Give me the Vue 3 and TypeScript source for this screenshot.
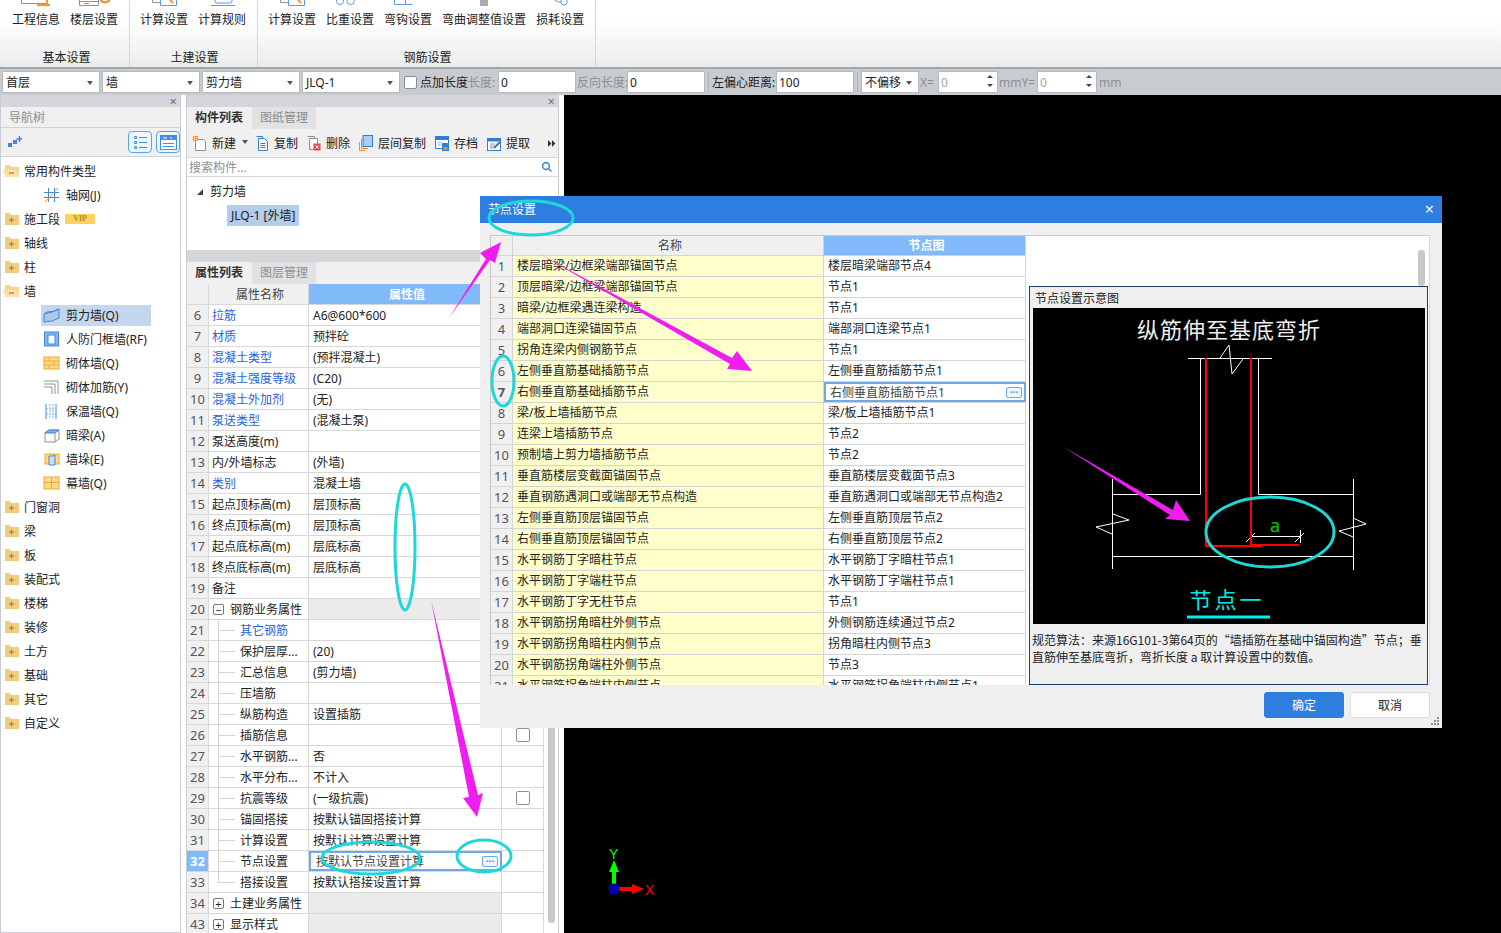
<script setup lang="ts">
interface RibbonItem { label: string; icon: string }
interface RibbonGroup { title: string; items: RibbonItem[] }
interface NavRow { label: string; icon: string; open?: boolean; child?: boolean; active?: boolean; vip?: boolean }
interface PropRow {
  no: number
  name: string
  value?: string
  link?: boolean
  sub?: boolean
  last?: boolean
  group?: '+' | '-'
  check?: boolean
  editing?: boolean
}

const ribbon: RibbonGroup[] = [
  { title: '基本设置', items: [{ label: '工程信息', icon: 'info' }, { label: '楼层设置', icon: 'floor' }] },
  { title: '土建设置', items: [{ label: '计算设置', icon: 'calc' }, { label: '计算规则', icon: 'rule' }] },
  {
    title: '钢筋设置',
    items: [
      { label: '计算设置', icon: 'calc' },
      { label: '比重设置', icon: 'weight' },
      { label: '弯钩设置', icon: 'hook' },
      { label: '弯曲调整值设置', icon: 'bend' },
      { label: '损耗设置', icon: 'loss' },
    ],
  },
]

const navRows: NavRow[] = [
  { label: '常用构件类型', icon: 'folder', open: true },
  { label: '轴网(J)', icon: 'grid', child: true },
  { label: '施工段', icon: 'folder', vip: true },
  { label: '轴线', icon: 'folder' },
  { label: '柱', icon: 'folder' },
  { label: '墙', icon: 'folder', open: true },
  { label: '剪力墙(Q)', icon: 'shear', child: true, active: true },
  { label: '人防门框墙(RF)', icon: 'door', child: true },
  { label: '砌体墙(Q)', icon: 'brick', child: true },
  { label: '砌体加筋(Y)', icon: 'rebar', child: true },
  { label: '保温墙(Q)', icon: 'insul', child: true },
  { label: '暗梁(A)', icon: 'beam', child: true },
  { label: '墙垛(E)', icon: 'pier', child: true },
  { label: '幕墙(Q)', icon: 'curtain', child: true },
  { label: '门窗洞', icon: 'folder' },
  { label: '梁', icon: 'folder' },
  { label: '板', icon: 'folder' },
  { label: '装配式', icon: 'folder' },
  { label: '楼梯', icon: 'folder' },
  { label: '装修', icon: 'folder' },
  { label: '土方', icon: 'folder' },
  { label: '基础', icon: 'folder' },
  { label: '其它', icon: 'folder' },
  { label: '自定义', icon: 'folder' },
]

const propRows: PropRow[] = [
  { no: 6, name: '拉筋', value: 'A6@600*600', link: true },
  { no: 7, name: '材质', value: '预拌砼', link: true },
  { no: 8, name: '混凝土类型', value: '(预拌混凝土)', link: true },
  { no: 9, name: '混凝土强度等级', value: '(C20)', link: true },
  { no: 10, name: '混凝土外加剂', value: '(无)', link: true },
  { no: 11, name: '泵送类型', value: '(混凝土泵)', link: true },
  { no: 12, name: '泵送高度(m)' },
  { no: 13, name: '内/外墙标志', value: '(外墙)' },
  { no: 14, name: '类别', value: '混凝土墙', link: true },
  { no: 15, name: '起点顶标高(m)', value: '层顶标高' },
  { no: 16, name: '终点顶标高(m)', value: '层顶标高' },
  { no: 17, name: '起点底标高(m)', value: '层底标高' },
  { no: 18, name: '终点底标高(m)', value: '层底标高' },
  { no: 19, name: '备注' },
  { no: 20, name: '钢筋业务属性', group: '-' },
  { no: 21, name: '其它钢筋', link: true, sub: true },
  { no: 22, name: '保护层厚...', value: '(20)', sub: true },
  { no: 23, name: '汇总信息', value: '(剪力墙)', sub: true },
  { no: 24, name: '压墙筋', sub: true },
  { no: 25, name: '纵筋构造', value: '设置插筋', sub: true },
  { no: 26, name: '插筋信息', sub: true, check: true },
  { no: 27, name: '水平钢筋...', value: '否', sub: true },
  { no: 28, name: '水平分布...', value: '不计入', sub: true },
  { no: 29, name: '抗震等级', value: '(一级抗震)', sub: true, check: true },
  { no: 30, name: '锚固搭接', value: '按默认锚固搭接计算', sub: true },
  { no: 31, name: '计算设置', value: '按默认计算设置计算', sub: true },
  { no: 32, name: '节点设置', value: '按默认节点设置计算', sub: true, editing: true },
  { no: 33, name: '搭接设置', value: '按默认搭接设置计算', sub: true, last: true },
  { no: 34, name: '土建业务属性', group: '+' },
  { no: 43, name: '显示样式', group: '+' },
]

const nodeRows: [string, string][] = [
  ['楼层暗梁/边框梁端部锚固节点', '楼层暗梁端部节点4'],
  ['顶层暗梁/边框梁端部锚固节点', '节点1'],
  ['暗梁/边框梁遇连梁构造', '节点1'],
  ['端部洞口连梁锚固节点', '端部洞口连梁节点1'],
  ['拐角连梁内侧钢筋节点', '节点1'],
  ['左侧垂直筋基础插筋节点', '左侧垂直筋插筋节点1'],
  ['右侧垂直筋基础插筋节点', '右侧垂直筋插筋节点1'],
  ['梁/板上墙插筋节点', '梁/板上墙插筋节点1'],
  ['连梁上墙插筋节点', '节点2'],
  ['预制墙上剪力墙插筋节点', '节点2'],
  ['垂直筋楼层变截面锚固节点', '垂直筋楼层变截面节点3'],
  ['垂直钢筋遇洞口或端部无节点构造', '垂直筋遇洞口或端部无节点构造2'],
  ['左侧垂直筋顶层锚固节点', '左侧垂直筋顶层节点2'],
  ['右侧垂直筋顶层锚固节点', '右侧垂直筋顶层节点2'],
  ['水平钢筋丁字暗柱节点', '水平钢筋丁字暗柱节点1'],
  ['水平钢筋丁字端柱节点', '水平钢筋丁字端柱节点1'],
  ['水平钢筋丁字无柱节点', '节点1'],
  ['水平钢筋拐角暗柱外侧节点', '外侧钢筋连续通过节点2'],
  ['水平钢筋拐角暗柱内侧节点', '拐角暗柱内侧节点3'],
  ['水平钢筋拐角端柱外侧节点', '节点3'],
  ['水平钢筋拐角端柱内侧节点', '水平钢筋拐角端柱内侧节点1'],
]
</script>

<template>
  <div class="app">
    <header class="ribbon">
      <section v-for="group in ribbon" :key="group.title" class="ribbon-group">
        <div class="ribbon-items">
          <div v-for="item in group.items" :key="item.label" class="ribbon-item">
            <svg class="ribbon-icon" width="36" height="12" viewBox="0 0 36 12" fill="none">
              <template v-if="item.icon === 'info'">
                <path d="M3.500 0v3.500h26V0" stroke="#5b9be0" />
                <path d="M19 5h13" stroke="#ee9a3c" stroke-width="2.500" />
                <path d="M29 0v4" stroke="#ee9a3c" stroke-width="2" />
              </template>
              <template v-else-if="item.icon === 'floor'">
                <path d="M3.500 0v5.500h19V0M3.500 1.500h19M8 3.500h5" stroke="#8a929b" />
                <path d="M24.500 0a5.500 5.500 0 0 0 9 0" stroke="#ee9a3c" stroke-width="2.500" />
              </template>
              <template v-else-if="item.icon === 'calc'">
                <path d="M6.500 0v2.500h8" stroke="#8a929b" />
                <path d="M14.500 0v5.500h16V0" stroke="#5b9be0" />
                <path d="M24 0l3 3" stroke="#ee9a3c" stroke-width="2" />
              </template>
              <template v-else-if="item.icon === 'rule'">
                <path d="M11 0v1q0 2 2 2h13q2 0 2-2V0" stroke="#5b9be0" />
                <path d="M7 5.500h24" stroke="#5b9be0" />
              </template>
              <path v-else-if="item.icon === 'weight'" d="M4.500 0v1.500a3.500 3 0 0 0 7 0V0M15 0v1.500a3.500 3 0 0 0 7 0V0" stroke="#5b9be0" />
              <path v-else-if="item.icon === 'hook'" d="M4.500 0v4.500h18M15.500 0v4.500" stroke="#5b9be0" />
              <rect v-else-if="item.icon === 'bend'" x="14" y="0" width="8" height="6" fill="#a9adb3" />
              <path v-else d="M13 0q3 3 6 2M19 0v2.500q0 2.500 3 2.500t3-2.500V0" stroke="#5b9be0" />
            </svg>
            <span>{{ item.label }}</span>
          </div>
        </div>
        <div class="ribbon-title">{{ group.title }}</div>
      </section>
    </header>

    <div class="optbar">
      <div class="combo w98">首层<i class="caret"></i></div>
      <div class="combo w98">墙<i class="caret"></i></div>
      <div class="combo w98">剪力墙<i class="caret"></i></div>
      <div class="combo w98">JLQ-1<i class="caret"></i></div>
      <span class="check"></span>
      <span class="opt-label w48">点加长度</span>
      <span class="opt-label muted w29">长度:</span>
      <div class="field w78">0</div>
      <span class="opt-label muted w52">反向长度:</span>
      <div class="field w78">0</div>
      <i class="opt-sep"></i>
      <span class="opt-label w64">左偏心距离:</span>
      <div class="field w78">100</div>
      <i class="opt-sep"></i>
      <div class="combo w58">不偏移<i class="caret"></i></div>
      <span class="opt-label muted w19">X=</span>
      <div class="field spin w60 muted-field">0<span class="spin-arrows"><i></i><i></i></span></div>
      <span class="opt-label muted w38">mmY=</span>
      <div class="field spin w60 muted-field">0<span class="spin-arrows"><i></i><i></i></span></div>
      <span class="opt-label muted mm">mm</span>
    </div>

    <main class="workspace">
      <aside class="nav">
        <div class="pane-head"><span class="pane-x">×</span></div>
        <div class="nav-title">导航树</div>
        <div class="nav-tools">
          <svg width="14" height="12" viewBox="0 0 14 12">
            <path d="M0 7h4v4H0zM5 4h4v4H5z" fill="#3f86d8" />
            <path d="M11.500 0v6M8.500 3h6" stroke="#3f86d8" stroke-width="1.500" />
          </svg>
          <span class="spacer"></span>
          <button class="nav-btn">
            <svg width="15" height="15" viewBox="0 0 15 15" fill="none" stroke="#3f8fe0">
              <path d="M1.500 1.500h2v2h-2zM1.500 6.500h2v2h-2zM1.500 11.500h2v2h-2zM6 2.500h8M6 7.500h8M6 12.500h8" />
            </svg>
          </button>
          <button class="nav-btn">
            <svg width="17" height="15" viewBox="0 0 17 15">
              <rect x="0.500" y="0.500" width="16" height="14" fill="#fff" stroke="#3f8fe0" />
              <rect x="1" y="1" width="15" height="4" fill="#3f8fe0" />
              <path d="M3 3h4M10 3h2" stroke="#fff" />
              <path d="M3 8.500h11M3 11.500h11" stroke="#3f8fe0" />
            </svg>
          </button>
        </div>
        <ul class="nav-tree">
          <li v-for="row in navRows" :key="row.label" class="nav-row" :class="{ child: row.child, active: row.active }">
            <svg class="nav-icon" width="18" height="16" viewBox="0 0 18 16" fill="none">
              <template v-if="row.icon === 'folder'">
                <path d="M2 3q0-1 1-1h4l1 2h8v10H2z" :fill="row.open ? '#f1d593' : '#f0cc80'" />
                <path v-if="row.open" d="M0 7h15l1 7H2z" fill="#f6dfa8" />
                <path :d="row.open ? 'M6 10h5' : 'M6 9h5M8.500 6.500v5'" stroke="#b58a34" stroke-width="1.400" />
              </template>
              <template v-else-if="row.icon === 'grid'">
                <path d="M5.500 1v14M11.500 1v14M1 5.500h15M1 10.500h15" stroke="#3f86d8" />
                <path d="M2 15L15 1" stroke="#f08a2c" />
              </template>
              <template v-else-if="row.icon === 'shear'">
                <path d="M1 7q8-1 15-5v9q-7 4-15 4z" fill="#a9c9ef" stroke="#3f86d8" />
                <path d="M1 7l3-2q7 0 12-3" stroke="#3f86d8" />
              </template>
              <template v-else-if="row.icon === 'door'">
                <rect x="1.500" y="1" width="14" height="14" fill="#8ab8ea" stroke="#3f86d8" />
                <rect x="5" y="4" width="7" height="9" fill="#fff" stroke="#3f86d8" />
              </template>
              <template v-else-if="row.icon === 'brick' || row.icon === 'curtain'">
                <rect x="1" y="2" width="15" height="12" fill="#ffd98a" stroke="#efa92e" />
                <path v-if="row.icon === 'brick'" d="M1 6h15M1 10h15M6 2v4M11 6v4M6 10v4" stroke="#efa92e" />
                <path v-else d="M1 7.500h15M8.500 2v12" stroke="#efa92e" />
              </template>
              <path v-else-if="row.icon === 'rebar'" d="M1 2h14v13M1 5h11v10M1 8h8v7" stroke="#8a929b" />
              <template v-else-if="row.icon === 'insul'">
                <path d="M3 1v15M13 1v15" stroke="#3f86d8" />
                <path d="M7 1v15M10 1v15M3 6h10M3 11h10" stroke="#8ab8ea" stroke-dasharray="2 1" />
              </template>
              <template v-else-if="row.icon === 'beam'">
                <path d="M2 6l4-3h10v9l-4 3H2z" fill="#fff" stroke="#8a929b" />
                <path d="M2 6l4-3h10l-4 3z" fill="#7fb0e6" stroke="#3f86d8" />
                <path d="M12 6v9" stroke="#8a929b" />
              </template>
              <template v-else-if="row.icon === 'pier'">
                <rect x="2" y="3" width="14" height="10" fill="#ffd98a" stroke="#efa92e" />
                <path d="M6 5h4l2-1v10H6z" fill="#cfe1f6" stroke="#3f86d8" />
              </template>
            </svg>
            <span>{{ row.label }}</span>
            <span v-if="row.vip" class="vip">VIP</span>
          </li>
        </ul>
      </aside>

      <section class="mid">
        <div class="pane-head"><span class="pane-x">×</span></div>
        <div class="tabs">
          <span class="tab on">构件列表</span>
          <span class="tab">图纸管理</span>
        </div>
        <div class="mid-tools">
          <span class="tool">
            <svg width="14" height="15" viewBox="0 0 14 15" fill="none">
              <path d="M2.500 3.500h8l2 2v9h-10z" fill="#fff" stroke="#8a929b" />
              <path d="M0 0h5v5H0z" fill="#f09a3c" />
              <path d="M1 1h1v1H1zM3 3h1v1H3zM3 1h1v1H3zM1 3h1v1H1z" fill="#fff" />
            </svg>
            新建<i class="caret tool-caret"></i>
          </span>
          <span class="tool">
            <svg width="13" height="15" viewBox="0 0 13 15" fill="none">
              <path d="M.5 .5h6v2" stroke="#2f7fd2" />
              <path d="M2.500 2.500h6l3 3v9h-9z" fill="#fff" stroke="#2f7fd2" />
              <path d="M4.500 7.500h5M4.500 9.500h5M4.500 11.500h5" stroke="#2f7fd2" />
            </svg>
            复制
          </span>
          <span class="tool">
            <svg width="14" height="15" viewBox="0 0 14 15" fill="none">
              <path d="M.5 .5h7v10" stroke="#8a929b" />
              <path d="M2.500 2.500h8v11h-8z" fill="#fff" stroke="#8a929b" />
              <rect x="6.500" y="7.500" width="7" height="7" fill="#e14b4b" />
              <path d="M8.500 9.500l3 3M11.500 9.500l-3 3" stroke="#fff" />
            </svg>
            删除
          </span>
          <span class="tool">
            <svg width="14" height="16" viewBox="0 0 14 16" fill="none">
              <rect x="4" y="0.500" width="9.500" height="11" fill="#a9cdf3" stroke="#2f7fd2" />
              <path d="M2.500 4v9.500H9M.5 7v8.500H6" stroke="#f08a2c" />
            </svg>
            层间复制
          </span>
          <span class="tool">
            <svg width="14" height="15" viewBox="0 0 14 15" fill="none">
              <rect x="0.500" y="0.500" width="13" height="12" fill="#fff" stroke="#2f7fd2" />
              <rect x="1" y="1" width="12" height="3" fill="#2f7fd2" />
              <path d="M3 6.500h3M3 9h3" stroke="#8ab8ea" />
              <rect x="7" y="7" width="7" height="8" fill="#2f7fd2" />
              <rect x="8.500" y="11" width="4" height="3" fill="#f08a2c" />
            </svg>
            存档
          </span>
          <span class="tool">
            <svg width="14" height="15" viewBox="0 0 14 15" fill="none">
              <rect x="0.500" y="2.500" width="13" height="12" fill="#fff" stroke="#2f7fd2" />
              <rect x="1" y="3" width="12" height="2.500" fill="#2f7fd2" />
              <path d="M3 8h5M3 10h4M3 12h3" stroke="#8a929b" />
              <path d="M7 12l6-6" stroke="#5a6f86" stroke-width="2" />
            </svg>
            提取
          </span>
          <span class="spacer"></span>
          <svg class="more" width="8" height="7" viewBox="0 0 8 7" fill="#333">
            <path d="M0 0l3.500 3.500L0 7zM4 0l3.500 3.500L4 7z" />
          </svg>
        </div>
        <div class="search">
          <span>搜索构件...</span>
          <svg width="12" height="12" viewBox="0 0 12 12" fill="none" stroke="#3f8fd8" stroke-width="1.600">
            <circle cx="5" cy="5" r="3.400" />
            <path d="M7.500 7.500l3 3" />
          </svg>
        </div>
        <div class="comp-tree">
          <div class="comp-root"><i class="tri"></i>剪力墙</div>
          <div class="comp-leaf"><span>JLQ-1 [外墙]</span></div>
        </div>
        <div class="split"></div>
        <div class="pane-head"></div>
        <div class="tabs">
          <span class="tab on">属性列表</span>
          <span class="tab">图层管理</span>
        </div>
        <div class="prop-wrap">
          <div class="prop-table">
            <div class="prow phead">
              <span class="c-no"></span>
              <span class="c-name center">属性名称</span>
              <span class="c-val hl">属性值</span>
              <span class="c-extra hl-fill"></span>
            </div>
            <div v-for="row in propRows" :key="row.no" class="prow">
              <span class="c-no" :class="{ 'no-on': row.editing }">{{ row.no }}</span>
              <span class="c-name" :class="{ link: row.link, sub: row.sub, last: row.last }">
                <i v-if="row.group" class="box">{{ row.group === '-' ? '−' : '+' }}</i>
                {{ row.name }}
              </span>
              <span class="c-val" :class="{ grouped: row.group, editing: row.editing }">
                {{ row.value }}
                <i v-if="row.editing" class="dots">···</i>
              </span>
              <span class="c-extra"><i v-if="row.check" class="check-box"></i></span>
            </div>
          </div>
          <div class="vscroll"><i></i></div>
        </div>
      </section>

      <div class="canvas">
        <svg class="axes" width="66" height="60" viewBox="0 0 66 60">
          <path d="M19 44V24" stroke="#00ff00" stroke-width="4" />
          <path d="M19 15l-5 12h10z" fill="#00ff00" />
          <path d="M19 44h20" stroke="#ff0000" stroke-width="4" />
          <path d="M49 44l-12-5v10z" fill="#ff0000" />
          <circle cx="19" cy="44" r="5.500" fill="#0000b8" />
          <text x="14" y="14" class="axis-y">Y</text>
          <text x="50" y="50" class="axis-x">X</text>
        </svg>
      </div>
    </main>

    <div class="dialog">
      <div class="dlg-title">
        <span>节点设置</span>
        <span class="dlg-x">×</span>
      </div>
      <div class="dlg-body">
        <div class="dlg-main">
          <div class="node-table">
            <div class="nrow nhead">
              <span class="n-no"></span>
              <span class="n-name center">名称</span>
              <span class="n-val hl">节点图</span>
            </div>
            <div v-for="(row, i) in nodeRows" :key="row[0]" class="nrow">
              <span class="n-no" :class="{ 'no-on': i === 6 }">{{ i + 1 }}</span>
              <span class="n-name">{{ row[0] }}</span>
              <span class="n-val" :class="{ editing: i === 6 }">
                {{ row[1] }}
                <i v-if="i === 6" class="dots">···</i>
              </span>
            </div>
          </div>
          <div class="dlg-side">
            <div class="side-scroll"><i></i></div>
            <div class="preview">
              <div class="preview-title">节点设置示意图</div>
              <svg class="drawing" width="392" height="316" viewBox="0 0 392 316" fill="none">
                <text x="196" y="30" class="draw-title">纵筋伸至基底弯折</text>
                <g stroke="#fff">
                  <path d="M155 50.500h84M187 50l9-13 3 29 11-15" />
                  <path d="M167.500 50v136.500H79M225.500 50v136.500H320" />
                  <path d="M79.500 171v90M320.500 171v91M79 248.500h241" />
                  <path d="M80 206l16 6-33 7 16 7M320 210l13 6-27 7 14 6" />
                  <path d="M219 228.500h48M213 234l9-9M262 234l9-9M267.500 222v13" />
                </g>
                <path d="M173 50v188h55M218 50v187h48" stroke="#ff0000" stroke-width="2" />
                <text x="242" y="224" class="draw-a">a</text>
                <text x="194" y="300" class="draw-node">节点一</text>
                <path d="M154 309h83" stroke="#00f0f0" stroke-width="3" />
              </svg>
              <p class="preview-note">
                规范算法：来源16G101-3第64页的“墙插筋在基础中锚固构造”节点；垂直筋伸至基底弯折，弯折长度 a 取计算设置中的数值。
              </p>
            </div>
          </div>
        </div>
        <div class="dlg-foot">
          <button class="btn primary">确定</button>
          <button class="btn">取消</button>
        </div>
        <svg class="grip" width="9" height="9" viewBox="0 0 9 9" fill="#8a8f96">
          <rect x="6" y="0" width="2" height="2" />
          <rect x="3" y="3" width="2" height="2" />
          <rect x="6" y="3" width="2" height="2" />
          <rect x="0" y="6" width="2" height="2" />
          <rect x="3" y="6" width="2" height="2" />
          <rect x="6" y="6" width="2" height="2" />
        </svg>
      </div>
    </div>

    <!-- hand drawn markup that sits on top of the screenshot -->
    <svg class="markup" width="1501" height="933" viewBox="0 0 1501 933" fill="none">
      <g fill="#f01cf0">
        <path d="M449 318L486 259 480 253 501 242 495 263 490 260z" />
        <path d="M538 253L732 358 737 351 752 371 727 369 730 364z" />
        <path d="M431 600L478 795 483 793 477 817 463 798 469 797z" />
        <path d="M1062 446L1173 510 1176 500 1190 521 1165 519 1170 515z" />
      </g>
      <g stroke="#1ed8d8" stroke-width="3">
        <ellipse cx="531" cy="218" rx="42" ry="17" />
        <ellipse cx="503" cy="381" rx="11" ry="25" />
        <ellipse cx="405" cy="547" rx="10" ry="63" />
        <ellipse cx="371" cy="858" rx="49" ry="16" />
        <ellipse cx="484" cy="856" rx="27" ry="16" />
        <ellipse cx="1270" cy="532" rx="64" ry="35" />
      </g>
    </svg>
  </div>
</template>

<style>
body {
  background: #fff;
}
</style>

<style scoped>
.app {
  position: relative;
  width: 1501px;
  height: 933px;
  overflow: hidden;
  display: flex;
  flex-direction: column;
  font-family: "Noto Sans", "Noto Sans CJK SC", sans-serif;
  font-size: 12px;
  color: #222;
  background: #fff;
}

.spacer {
  flex: 1;
}

.center {
  text-align: center;
}

/* ribbon */
.ribbon {
  height: 67px;
  flex: none;
  display: flex;
  background: linear-gradient(#ffffff, #ffffff 30%, #e9edec);
}

.ribbon-group {
  padding: 0 11px;
  margin-right: -1px;
  border-right: 1px solid #d4d7d6;
  display: flex;
  flex-direction: column;
}

.ribbon-group:first-child {
  padding-left: 12px;
}

.ribbon-items {
  height: 49px;
  display: flex;
  gap: 10px;
}

.ribbon-item {
  display: flex;
  flex-direction: column;
  align-items: center;
  line-height: 16px;
  white-space: nowrap;
}

.ribbon-icon {
  flex: none;
}

.ribbon-title {
  padding-left: 3px;
  text-align: center;
  line-height: 18px;
}

/* option bar */
.optbar {
  height: 26px;
  flex: none;
  display: flex;
  align-items: center;
  padding-left: 2px;
  background: #c8cbd0;
  border-top: 2px solid #a4a8a8;
  white-space: nowrap;
}

.combo,
.field {
  height: 22px;
  box-sizing: border-box;
  line-height: 21px;
  padding-left: 3px;
  background: #fff;
  border: 1px solid #b5b8bc;
  position: relative;
  flex: none;
}

.combo {
  margin-right: 2px;
}

.field {
  padding-left: 2px;
}

.w98 { width: 98px; }
.w78 { width: 78px; }
.w58 { width: 58px; margin-right: 1px; }
.w60 { width: 60px; }

.opt-label {
  flex: none;
  display: block;
}

.w19 { width: 18px; }
.w29 { width: 30px; }
.w38 { width: 39px; padding-left: 1px; box-sizing: border-box; }
.w48 { width: 48px; }
.w52 { width: 50px; padding-left: 1px; box-sizing: content-box; }
.w64 { width: 64px; }
.mm { margin-left: 2px; }

.caret {
  position: absolute;
  right: 6px;
  top: 9px;
  border: 3px solid transparent;
  border-top: 4px solid #555;
  border-bottom: 0;
}

.check {
  width: 13px;
  height: 13px;
  margin: 0 3px 0 2px;
  flex: none;
  box-sizing: border-box;
  background: #fff;
  border: 1px solid #8b8f94;
  border-radius: 2px;
}

.opt-label.muted {
  color: #8c8f94;
}

.opt-sep {
  width: 1px;
  height: 20px;
  margin: 0 3px;
  background: #b0b3b7;
}

.muted-field {
  color: #a2a5a8;
}

.spin-arrows {
  position: absolute;
  right: 4px;
  top: 3px;
  display: flex;
  flex-direction: column;
  gap: 6px;
}

.spin-arrows i {
  border: 3px solid transparent;
  border-bottom: 3px solid #444;
  border-top: 0;
}

.spin-arrows i:last-child {
  border-top: 3px solid #444;
  border-bottom: 0;
}

/* panels */
.workspace {
  flex: 1;
  min-height: 0;
  display: flex;
}

.pane-head {
  height: 12px;
  flex: none;
  background: #d4d6da;
  position: relative;
}

.pane-x {
  position: absolute;
  right: 3px;
  top: -2px;
  color: #6c6f74;
  font-size: 13px;
  line-height: 16px;
}

.nav {
  width: 181px;
  box-sizing: border-box;
  flex: none;
  margin-right: 5px;
  border: 1px solid #c9ccd0;
  border-top: 0;
  display: flex;
  flex-direction: column;
}

.nav-title {
  height: 21px;
  flex: none;
  box-sizing: border-box;
  padding-left: 8px;
  line-height: 21px;
  color: #8a8d92;
  background: #f0f0f0;
  border-bottom: 1px solid #cfd1d4;
}

.nav-tools {
  height: 29px;
  flex: none;
  box-sizing: border-box;
  display: flex;
  align-items: center;
  gap: 4px;
  padding: 0 0 0 7px;
  background: #f0f0f0;
  border-bottom: 1px solid #cfd1d4;
}

.nav-btn {
  width: 24px;
  height: 22px;
  padding: 0;
  display: flex;
  align-items: center;
  justify-content: center;
  background: #eef6ff;
  border: 1px solid #5aa5ea;
  border-radius: 4px;
}

.nav-tree {
  list-style: none;
  margin: 2px 0 0;
  padding: 0;
}

.nav-row {
  height: 24px;
  display: flex;
  align-items: center;
  gap: 3px;
  padding-left: 2px;
}

.nav-row.child {
  padding-left: 42px;
  gap: 5px;
  position: relative;
}

.nav-row.active {
  background: linear-gradient(#c5d7ee, #c5d7ee) 40px 50% / 110px 21px no-repeat;
}

.vip {
  width: 30px;
  height: 10px;
  margin-left: 2px;
  text-align: center;
  font-family: "Liberation Serif", serif;
  font-size: 8px;
  font-weight: 700;
  line-height: 10px;
  color: #b8892a;
  background: #fbd25c;
}

.mid {
  width: 373px;
  box-sizing: border-box;
  flex: none;
  border-right: 1px solid #c9ccd0;
  border-left: 1px solid #c9ccd0;
  display: flex;
  flex-direction: column;
  min-height: 0;
}

.tabs {
  height: 22px;
  flex: none;
  display: flex;
  background: #f0f0f0;
}

.tab {
  width: 64px;
  text-align: center;
  line-height: 22px;
  color: #8a8d92;
  background: #e2e2e2;
  border-left: 1px solid #f0f0f0;
}

.tab.on {
  color: #333;
  font-weight: 700;
  background: #f0f0f0;
  border-left: 0;
}

.mid-tools {
  height: 28px;
  flex: none;
  display: flex;
  align-items: center;
  gap: 9px;
  padding-left: 6px;
  background: #f0f0f0;
  white-space: nowrap;
}

.tool {
  display: flex;
  align-items: center;
  gap: 5px;
  position: relative;
}

.tool:first-child {
  padding-right: 12px;
  margin-right: -1px;
}

.tool-caret {
  right: 0;
  top: 6px;
}

.more {
  margin-right: 2px;
}

.search {
  height: 20px;
  flex: none;
  box-sizing: border-box;
  display: flex;
  align-items: center;
  justify-content: space-between;
  padding: 0 5px 0 2px;
  color: #8c8f94;
  border-top: 1px solid #d8d8d8;
  border-bottom: 1px solid #d8d8d8;
}

.comp-tree {
  height: 68px;
  flex: none;
  padding-top: 4px;
  box-sizing: border-box;
}

.comp-root {
  height: 22px;
  line-height: 22px;
  padding-left: 10px;
  display: flex;
  align-items: center;
}

.tri {
  width: 0;
  height: 0;
  margin-right: 7px;
  border-left: 6px solid transparent;
  border-bottom: 6px solid #444;
}

.comp-leaf {
  padding: 2px 0 0 40px;
}

.comp-leaf span {
  display: inline-block;
  line-height: 21px;
  padding: 0 4px;
  background: #b3cdea;
}

.split {
  height: 5px;
  flex: none;
}

.prop-wrap {
  flex: 1;
  min-height: 0;
  display: flex;
}

.prop-table {
  width: 357px;
  flex: none;
}

.prow {
  height: 21px;
  display: flex;
  box-sizing: border-box;
  border-bottom: 1px solid #d8d8d8;
  line-height: 21px;
  white-space: nowrap;
}

.prow > span {
  display: block;
  box-sizing: border-box;
  border-right: 1px solid #d8d8d8;
}

.c-no {
  width: 22px;
  flex: none;
  text-align: center;
  font-size: 13px;
  color: #555;
  background: #f0f0f0;
}

.c-name {
  width: 100px;
  flex: none;
  padding-left: 3px;
  position: relative;
}

.c-name.link {
  color: #2563d8;
}

.c-name.sub {
  padding-left: 31px;
}

.c-name.sub::before {
  content: "";
  position: absolute;
  left: 9px;
  top: 0;
  bottom: 0;
  width: 16px;
  height: 21px;
  border-left: 1px solid #d4d4d4;
  background: linear-gradient(#d4d4d4, #d4d4d4) 0 10px / 16px 1px no-repeat;
}

.c-name.sub.last::before {
  height: 10px;
  background: none;
  border-bottom: 1px solid #d4d4d4;
}

.box {
  display: inline-block;
  width: 11px;
  height: 11px;
  margin: 0 3px 0 1px;
  box-sizing: border-box;
  font-style: normal;
  text-align: center;
  font-size: 11px;
  line-height: 9px;
  vertical-align: 0;
  border: 1px solid #777;
  border-radius: 2px;
  background: #fff;
}

.c-val {
  width: 193px;
  flex: none;
  padding-left: 4px;
  position: relative;
}

.c-val.grouped {
  background: #ebebeb;
}

.c-extra {
  width: 42px;
  flex: none;
  display: flex !important;
  align-items: center;
  justify-content: center;
}

.hl {
  color: #fff;
  text-align: center;
  font-weight: 700;
  background: #80baf8;
}

.hl-fill {
  background: #fff;
}

.phead .c-no,
.phead .c-name {
  background: #f0f0f0;
  color: #444;
}

.no-on {
  color: #fff;
  font-weight: 700;
  background: #80baf8;
}

.editing {
  border: 2px solid #6ba9ea !important;
  padding-left: 5px;
  line-height: 17px;
  color: #444;
}

.dots {
  position: absolute;
  right: 2px;
  top: 3px;
  width: 16px;
  height: 11px;
  box-sizing: border-box;
  font-style: normal;
  font-weight: 700;
  text-align: center;
  font-size: 10px;
  line-height: 8px;
  color: #4a90e2;
  background: #eef5fd;
  border: 1px solid #6ba9ea;
  border-radius: 2px;
}

.check-box {
  width: 14px;
  height: 14px;
  box-sizing: border-box;
  border: 1px solid #8b8f94;
  border-radius: 2px;
  background: #fff;
}

.vscroll {
  flex: 1;
  display: flex;
  justify-content: center;
  align-items: flex-end;
}

.vscroll i {
  width: 7px;
  height: 620px;
  margin-bottom: 10px;
  border-radius: 4px;
  background: #c8c8c8;
}

.canvas {
  flex: 1;
  margin-left: 5px;
  background: #000;
  position: relative;
}

.axes {
  position: absolute;
  left: 31px;
  top: 750px;
}

.axis-y {
  font-family: "Liberation Sans", sans-serif;
  font-size: 14px;
  fill: #00ff00;
}

.axis-x {
  font-family: "Liberation Sans", sans-serif;
  font-size: 14px;
  fill: #ff0000;
}

/* dialog */
.dialog {
  position: absolute;
  left: 480px;
  top: 196px;
  width: 962px;
  height: 532px;
  display: flex;
  flex-direction: column;
  background: #efefef;
}

.dlg-title {
  height: 27px;
  flex: none;
  box-sizing: border-box;
  display: flex;
  justify-content: space-between;
  padding: 0 8px;
  line-height: 27px;
  color: #fff;
  background: #2e7ee0;
}

.dlg-x {
  font-size: 16px;
}

.dlg-body {
  flex: 1;
  min-height: 0;
  position: relative;
  display: flex;
  flex-direction: column;
  padding: 12px 12px 0 10px;
}

.dlg-main {
  height: 449px;
  flex: none;
  display: flex;
  overflow: hidden;
  border-top: 1px solid #c9c9c9;
  border-left: 1px solid #c9c9c9;
  border-right: 1px solid #d8d8d8;
  background: #fff;
}

.node-table {
  width: 535px;
  flex: none;
}

.nrow {
  height: 21px;
  display: flex;
  box-sizing: border-box;
  border-bottom: 1px solid #d4d4d4;
  line-height: 20px;
  white-space: nowrap;
}

.nhead {
  height: 20px;
}

.nrow > span {
  display: block;
  box-sizing: border-box;
  border-right: 1px solid #d4d4d4;
}

.n-no {
  width: 22px;
  flex: none;
  text-align: center;
  font-size: 13px;
  color: #555;
  background: #f0f0f0;
}

.n-name {
  width: 311px;
  flex: none;
  padding-left: 4px;
  background: #ffffcc;
}

.nhead .n-name {
  background: #f0f0f0;
  color: #444;
}

.nhead .n-no {
  background: #f0f0f0;
}

.n-val {
  width: 202px;
  flex: none;
  padding-left: 4px;
  position: relative;
}

.dlg-side {
  flex: 1;
  min-width: 0;
  position: relative;
  display: flex;
  flex-direction: column;
  justify-content: flex-end;
  padding: 0 1px 0 3px;
}

.side-scroll {
  position: absolute;
  right: 4px;
  top: 14px;
}

.side-scroll i {
  display: block;
  width: 7px;
  height: 36px;
  background: #c8c8c8;
  border-radius: 3px;
}

.preview {
  height: 399px;
  box-sizing: border-box;
  background: #efefef;
  border: 1px solid #1f3d6d;
  padding: 0 2px 0 3px;
}

.preview-title {
  height: 21px;
  line-height: 23px;
  padding-left: 2px;
}

.drawing {
  display: block;
  background: #000;
}

.draw-title {
  font-size: 22px;
  letter-spacing: 1px;
  text-anchor: middle;
  fill: #f0f0f0;
  stroke: none;
}

.draw-a {
  font-size: 18px;
  text-anchor: middle;
  fill: #00d000;
}

.draw-node {
  font-size: 22px;
  letter-spacing: 3px;
  text-anchor: middle;
  fill: #00e8e8;
}

.preview-note {
  margin: 7px -2px 0 -1px;
  font-family: "Noto Sans CJK SC", sans-serif;
  line-height: 17px;
}

.dlg-foot {
  flex: 1;
  display: flex;
  justify-content: flex-end;
  align-items: flex-start;
  gap: 6px;
  padding-top: 7px;
}

.btn {
  width: 80px;
  height: 26px;
  padding: 0;
  font: inherit;
  color: #222;
  background: #fff;
  border: 1px solid #dcdcdc;
  border-radius: 3px;
}

.btn.primary {
  color: #fff;
  background: #2e7ee0;
  border-color: #2e7ee0;
}

.grip {
  position: absolute;
  right: 2px;
  bottom: 2px;
}

.markup {
  position: absolute;
  left: 0;
  top: 0;
  pointer-events: none;
}
</style>
